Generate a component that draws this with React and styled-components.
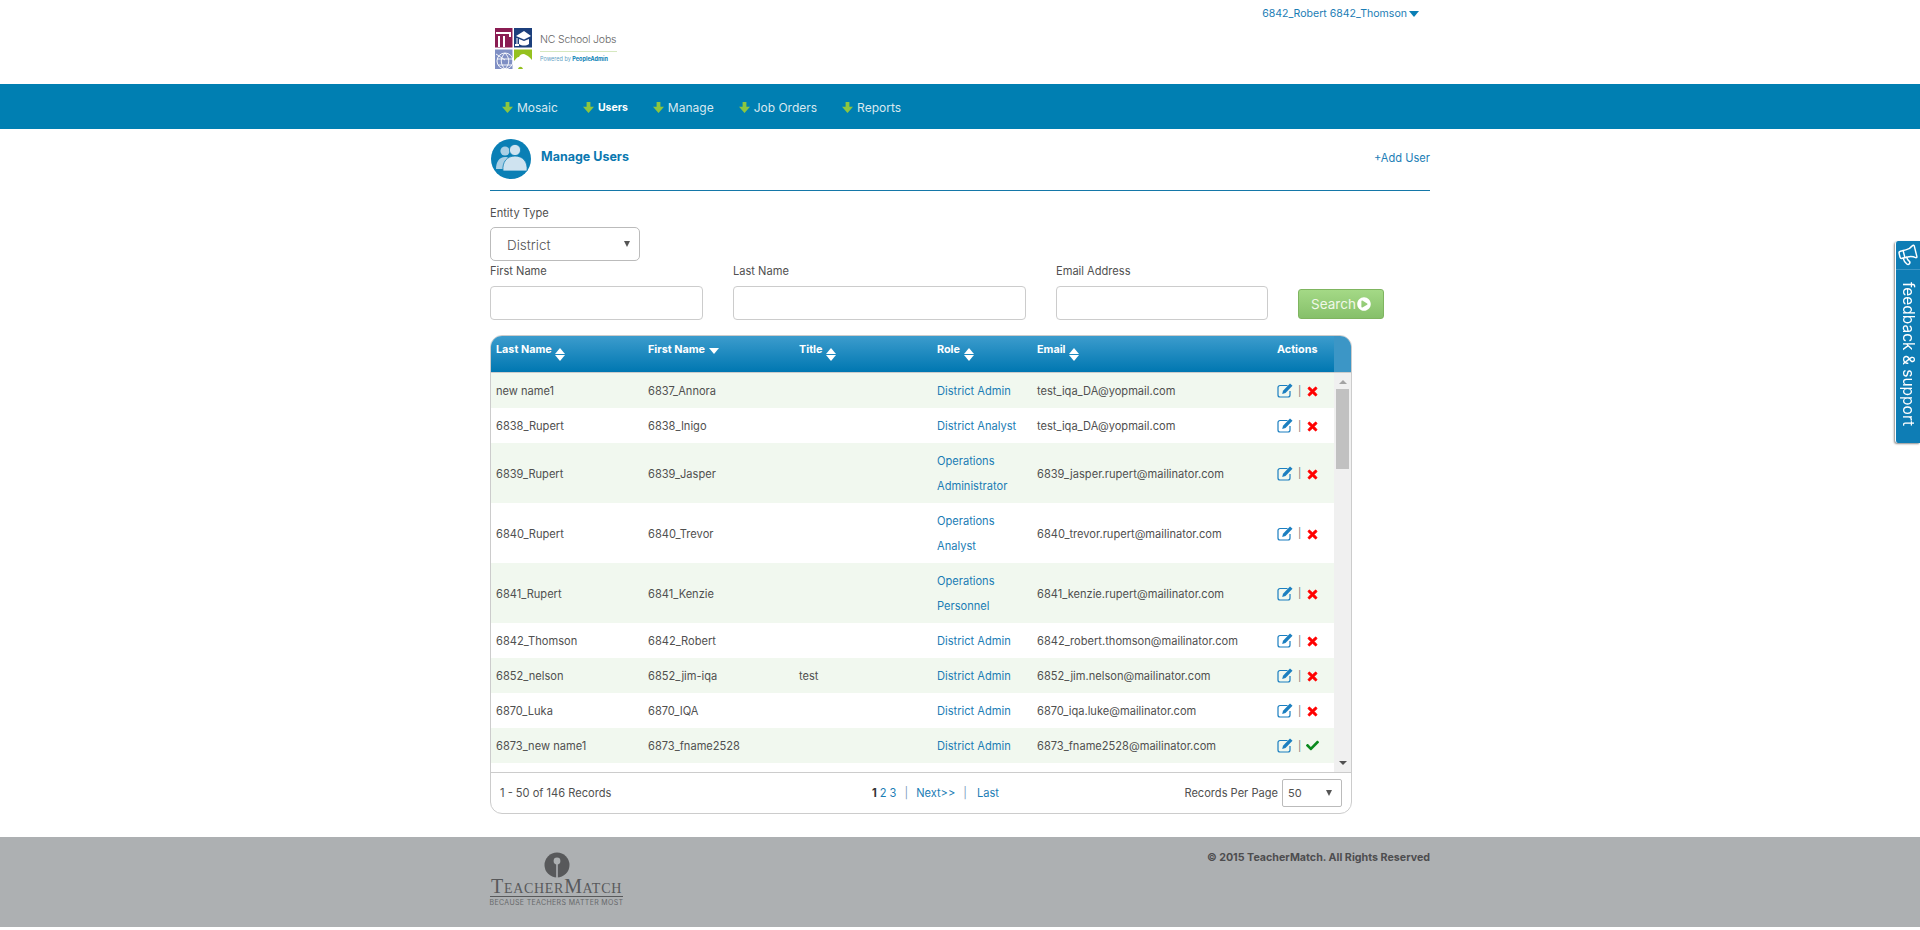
import styled, { createGlobalStyle } from "styled-components";
import { FaTimes, FaCheck, FaPlayCircle } from "react-icons/fa";
import { Megaphone } from "lucide-react";

const FONT = `Inter, "Liberation Sans", sans-serif`;
const COLS = "152px 151px 138px 100px 240px 62px";

const rows = [
	{ last: "new name1", first: "6837_Annora", role: "District Admin", email: "test_iqa_DA@yopmail.com" },
	{ last: "6838_Rupert", first: "6838_Inigo", role: "District Analyst", email: "test_iqa_DA@yopmail.com" },
	{ last: "6839_Rupert", first: "6839_Jasper", role: "Operations\nAdministrator", email: "6839_jasper.rupert@mailinator.com" },
	{ last: "6840_Rupert", first: "6840_Trevor", role: "Operations\nAnalyst", email: "6840_trevor.rupert@mailinator.com" },
	{ last: "6841_Rupert", first: "6841_Kenzie", role: "Operations\nPersonnel", email: "6841_kenzie.rupert@mailinator.com" },
	{ last: "6842_Thomson", first: "6842_Robert", role: "District Admin", email: "6842_robert.thomson@mailinator.com" },
	{ last: "6852_nelson", first: "6852_jim-iqa", title: "test", role: "District Admin", email: "6852_jim.nelson@mailinator.com" },
	{ last: "6870_Luka", first: "6870_IQA", role: "District Admin", email: "6870_iqa.luke@mailinator.com" },
	{ last: "6873_new name1", first: "6873_fname2528", role: "District Admin", email: "6873_fname2528@mailinator.com", inactive: true },
];

const navItems = ["Mosaic", "Users", "Manage", "Job Orders", "Reports"];

function LogoTiles() {
	return (
		<svg width="37" height="41" viewBox="0 0 37 41">
			<rect x="0" y="0" width="17.5" height="19.5" fill="#8a1c52" />
			<rect x="19" y="0" width="18" height="19.5" fill="#1c3f7c" />
			<rect x="0" y="21.5" width="17.5" height="19.5" fill="#7f8fc4" />
			<rect x="19" y="21.5" width="18" height="19.5" fill="#95c11f" />
			<path d="M1 4h13v2H1zM11 4h5v5h-2V6h-3zM3 8h2v11H3zM8 8h2v11H8z" fill="#fff" />
			<path d="M21 8l8-5 7 5-7 3.5zM24 11l5 2 5-2v5c-3 2-7 2-10 0z" fill="#fff" />
			<path d="M21.5 10h1v6h1.500v2h-4v-2h1.500z" fill="#fff" />
			<circle cx="10" cy="33" r="8" fill="none" stroke="#fff" strokeWidth="0.9" />
			<path d="M2 31h16M3 37h14M10 25c-5 5-5 11 0 16M10 25c5 5 5 11 0 16M1 26l9 6" fill="none" stroke="#fff" strokeWidth="0.9" />
			<path d="M19 41V33c2-2 3-4 5-4 1-3 5-4 7-2 3 1 4 3 6 5v9h-9c-1-3-4-3-5 0z" fill="#fff" />
		</svg>
	);
}

function UsersBadge() {
	return (
		<svg width="40" height="40" viewBox="0 0 40 40">
			<circle cx="20" cy="20" r="20" fill="#0a7fb5" />
			<circle cx="14" cy="12" r="4.600" fill="#a9cfe5" />
			<path d="M5 30c0-7 3-12 9-12 3 0 5 1 6 3v9z" fill="#a9cfe5" />
			<circle cx="24" cy="11" r="5.600" fill="#cfe3f0" stroke="#0a7fb5" strokeWidth="0.8" />
			<path d="M12 32c-1-9 4-15 12-15s13 6 12 15z" fill="#cfe3f0" stroke="#0a7fb5" strokeWidth="0.8" />
		</svg>
	);
}

function KeyholeMark() {
	return (
		<svg width="26" height="26" viewBox="0 0 26 26">
			<circle cx="13" cy="13" r="12.5" fill="#58595b" />
			<circle cx="13" cy="9" r="3.400" fill="#adb0b2" />
			<rect x="12.2" y="9" width="1.6" height="17" fill="#adb0b2" />
		</svg>
	);
}

function NavArrow() {
	return (
		<svg width="11" height="11" viewBox="0 0 11 11">
			<path d="M3.600 0h3.800v4.800H11L5.500 11 0 4.800h3.600z" fill="#8dc63f" />
		</svg>
	);
}

function EditIcon() {
	return (
		<svg width="16" height="15" viewBox="0 0 16 15">
			<path
				d="M10.500 2.500H3a2 2 0 0 0-2 2V12a2 2 0 0 0 2 2h8a2 2 0 0 0 2-2V8"
				fill="none"
				stroke="#1b7fc0"
				strokeWidth="1.200"
			/>
			<path d="M13 0.500l2.500 2.300-7 7.200-3.300 1 0.800-3.300z" fill="#1b7fc0" />
		</svg>
	);
}

function SortArrows({ down }) {
	return (
		<Sort>
			{!down && <TriUp />}
			<TriDown />
		</Sort>
	);
}

export default function App() {
	return (
		<>
			<GlobalStyle />
			<Header>
				<HeaderInner>
					<Logo>
						<LogoTiles />
						<LogoText>
							<LogoName>NC School Jobs</LogoName>
							<LogoSub>
								Powered by <b>PeopleAdmin</b>
							</LogoSub>
						</LogoText>
					</Logo>
					<UserMenu>
						6842_Robert 6842_Thomson
						<Caret />
					</UserMenu>
				</HeaderInner>
			</Header>
			<Nav>
				<NavInner>
					{navItems.map((item) => (
						<NavItem key={item} $active={item === "Users"}>
							<NavArrow />
							{item}
						</NavItem>
					))}
				</NavInner>
			</Nav>
			<Main>
				<TitleRow>
					<TitleLeft>
						<UsersBadge />
						<PageTitle>Manage Users</PageTitle>
					</TitleLeft>
					<AddLink>+Add User</AddLink>
				</TitleRow>

				<EntityLabel>Entity Type</EntityLabel>
				<SelectBox $w={150} $h={34} $r={5}>
					<EntityValue>District</EntityValue>
				</SelectBox>

				<SearchForm>
					<Field $w={213}>
						<Label>First Name</Label>
						<Input />
					</Field>
					<Field $w={293}>
						<Label>Last Name</Label>
						<Input />
					</Field>
					<Field $w={212}>
						<Label>Email Address</Label>
						<Input />
					</Field>
					<SearchButton>
						Search
						<FaPlayCircle />
					</SearchButton>
				</SearchForm>

				<Grid>
					<GridHead>
						<HeadRow>
							<HeadCell>
								Last Name <SortArrows />
							</HeadCell>
							<HeadCell>
								First Name <SortArrows down />
							</HeadCell>
							<HeadCell>
								Title <SortArrows />
							</HeadCell>
							<HeadCell>
								Role <SortArrows />
							</HeadCell>
							<HeadCell>
								Email <SortArrows />
							</HeadCell>
							<HeadCell>Actions</HeadCell>
						</HeadRow>
						<HeadStrip />
					</GridHead>
					<GridBody>
						<RowList>
							{rows.map((r, i) => (
								<Row key={r.email + r.last} $odd={i % 2 === 0}>
									<Cell>{r.last}</Cell>
									<Cell>{r.first}</Cell>
									<Cell>{r.title}</Cell>
									<RoleCell>{r.role}</RoleCell>
									<Cell>{r.email}</Cell>
									<ActionCell>
										<EditIcon />
										<Divider>|</Divider>
										{r.inactive ? <CheckIcon /> : <RemoveIcon />}
									</ActionCell>
								</Row>
							))}
						</RowList>
						<ScrollBar>
							<ScrollUp />
							<ScrollThumb />
							<ScrollDown />
						</ScrollBar>
					</GridBody>
					<GridFoot>
						<span>1 - 50 of 146 Records</span>
						<Pager>
							<b>1</b>
							<PageLink>2</PageLink>
							<PageLink>3</PageLink>
							<PagerBar>|</PagerBar>
							<PageLink>Next&gt;&gt;</PageLink>
							<PagerBar>|</PagerBar>
							<PageLink>Last</PageLink>
						</Pager>
						<PerPage>
							Records Per Page
							<SelectBox $w={60} $h={28} $r={2}>
								<PerPageValue>50</PerPageValue>
							</SelectBox>
						</PerPage>
					</GridFoot>
				</Grid>
			</Main>
			<Footer>
				<FooterInner>
					<FooterLogo>
						<KeyholeMark />
						<FooterName>TeacherMatch</FooterName>
						<FooterTag>BECAUSE TEACHERS MATTER MOST</FooterTag>
					</FooterLogo>
					<Copyright>© 2015 TeacherMatch. All Rights Reserved</Copyright>
				</FooterInner>
			</Footer>
			<Feedback>
				<FeedbackIcon>
					<Megaphone size={22} strokeWidth={1.6} />
				</FeedbackIcon>
				<FeedbackText>feedback &amp; support</FeedbackText>
			</Feedback>
		</>
	);
}

const GlobalStyle = createGlobalStyle`
	* {
		box-sizing: border-box;
	}

	body {
		margin: 0;
		background: #fff;
		font-family: ${FONT};
		font-size: 11.1px;
		color: #505050;
	}
`;

const Header = styled.header`
	height: 84px;
`;

const HeaderInner = styled.div`
	display: flex;
	justify-content: space-between;
	width: 940px;
	height: 100%;
	margin: 0 auto;
	padding: 7px 11px 0 5px;
`;

const Logo = styled.div`
	display: flex;
	align-items: flex-start;
	gap: 8px;
	margin-top: 21px;
`;

const LogoText = styled.div`
	display: flex;
	flex-direction: column;
	width: 77px;
	margin-top: 5px;
`;

const LogoName = styled.div`
	font-size: 10.5px;
	font-weight: 300;
	letter-spacing: -0.2px;
	color: #666;
	padding-bottom: 5px;
	border-bottom: 1px solid #d6e8c0;
	white-space: nowrap;
`;

const LogoSub = styled.div`
	margin-top: 4px;
	font-size: 5.5px;
	color: #5f9fc4;
	white-space: nowrap;

	b {
		color: #0a7fb5;
	}
`;

const UserMenu = styled.div`
	display: flex;
	align-items: flex-start;
	gap: 2px;
	font-size: 10.55px;
	line-height: 14px;
	color: #1b7db5;
`;

const Caret = styled.span`
	width: 0;
	height: 0;
	margin-top: 4px;
	border-left: 5px solid transparent;
	border-right: 5px solid transparent;
	border-top: 6px solid #0a7fb5;
`;

const Nav = styled.nav`
	height: 45px;
	background: #007fb2;
`;

const NavInner = styled.div`
	display: flex;
	align-items: center;
	gap: 25px;
	width: 940px;
	height: 100%;
	margin: 0 auto;
	padding: 1px 0 0 12px;
`;

const NavItem = styled.div`
	display: flex;
	align-items: center;
	gap: 4px;
	font-size: ${(p) => (p.$active ? 10.5 : 12)}px;
	font-weight: ${(p) => (p.$active ? 700 : 400)};
	color: ${(p) => (p.$active ? "#fff" : "#d8e8f0")};
`;

const Main = styled.main`
	width: 940px;
	height: 708px;
	margin: 0 auto;
`;

const TitleRow = styled.div`
	display: flex;
	align-items: flex-start;
	justify-content: space-between;
	height: 62px;
	padding-top: 10px;
	border-bottom: 1px solid #1477a8;
`;

const TitleLeft = styled.div`
	display: flex;
	align-items: flex-start;
	gap: 10px;
	padding-left: 1px;
`;

const PageTitle = styled.h1`
	margin: 10px 0 0;
	font-size: 12.5px;
	font-weight: 700;
	color: #0a78b0;
`;

const AddLink = styled.a`
	margin-top: 12px;
	color: #1b7db5;
`;

const EntityLabel = styled.div`
	margin-top: 15px;
	line-height: 14px;
`;

const SelectBox = styled.div`
	position: relative;
	display: flex;
	align-items: center;
	width: ${(p) => p.$w}px;
	height: ${(p) => p.$h}px;
	margin-top: ${(p) => (p.$w > 100 ? 7 : 0)}px;
	border: 1px solid #bbb;
	border-radius: ${(p) => p.$r}px;

	&::after {
		content: "";
		position: absolute;
		right: 9px;
		top: 50%;
		margin-top: -3px;
		border-left: 3.5px solid transparent;
		border-right: 3.5px solid transparent;
		border-top: 6px solid #555;
	}
`;

const EntityValue = styled.span`
	padding: 1px 0 0 16px;
	font-size: 13.5px;
	font-weight: 300;
	color: #555;
`;

const PerPageValue = styled.span`
	padding-left: 5px;
	font-size: 11px;
`;

const SearchForm = styled.div`
	display: flex;
	align-items: flex-end;
	gap: 30px;
	margin-top: 3px;
`;

const Field = styled.div`
	display: flex;
	flex-direction: column;
	gap: 8px;
	width: ${(p) => p.$w}px;
`;

const Label = styled.label`
	line-height: 14px;
`;

const Input = styled.input`
	width: 100%;
	height: 34px;
	border: 1px solid #ccc;
	border-radius: 4px;
	background: #fff;
`;

const SearchButton = styled.button`
	display: flex;
	align-items: center;
	justify-content: center;
	gap: 1px;
	width: 86px;
	height: 30px;
	margin-bottom: 1px;
	padding: 0;
	border: 1px solid #7fb560;
	border-radius: 3px;
	background: linear-gradient(#a4d986, #86c06a);
	font-family: ${FONT};
	font-size: 13.5px;
	color: #f0f8e8;

	svg {
		font-size: 14px;
		color: #fff;
	}
`;

const Grid = styled.section`
	width: 862px;
	height: 479px;
	margin-top: 15px;
	border: 1px solid #ccc;
	border-radius: 12px;
	overflow: hidden;
`;

const GridHead = styled.div`
	display: flex;
	height: 37px;
	border-bottom: 1px solid #ccc;
`;

const HeadRow = styled.div`
	display: grid;
	grid-template-columns: ${COLS};
	flex: 1;
	background: linear-gradient(#3c9ccd, #0077b1);
`;

const HeadCell = styled.div`
	display: flex;
	align-items: flex-start;
	padding: 7px 0 0 5px;
	font-size: 10.8px;
	font-weight: 700;
	line-height: 14px;
	color: #fff;
	white-space: pre;
`;

const HeadStrip = styled.div`
	width: 17px;
	background: #3c96c6;
`;

const Sort = styled.span`
	display: flex;
	flex-direction: column;
	gap: 1px;
	margin: 5px 0 0 1px;
`;

const TriUp = styled.i`
	border-left: 5px solid transparent;
	border-right: 5px solid transparent;
	border-bottom: 6px solid #fff;
`;

const TriDown = styled.i`
	border-left: 5px solid transparent;
	border-right: 5px solid transparent;
	border-top: 6px solid #fff;
`;

const GridBody = styled.div`
	display: flex;
	height: 400px;
	border-bottom: 1px solid #ccc;
`;

const RowList = styled.div`
	flex: 1;
	min-width: 0;
`;

const Row = styled.div`
	display: grid;
	grid-template-columns: ${COLS};
	align-items: center;
	min-height: 35px;
	background: ${(p) => (p.$odd ? "#f1f8ef" : "#fff")};
`;

const Cell = styled.div`
	padding: 1px 0 0 5px;
	white-space: nowrap;
`;

const RoleCell = styled(Cell)`
	padding: 6px 0 4px 5px;
	line-height: 25px;
	color: #1b7db5;
	white-space: pre-line;

	${Row}:nth-child(-n + 2) &,
	${Row}:nth-child(n + 6) & {
		padding: 1px 0 0 5px;
	}
`;

const ActionCell = styled.div`
	display: flex;
	align-items: center;
	gap: 5px;
	padding: 0 0 0 5px;
`;

const RemoveIcon = styled(FaTimes)`
	font-size: 13px;
	margin-top: 2px;
	stroke: #f00;
	stroke-width: 30;
	color: #f00;
`;

const CheckIcon = styled(FaCheck)`
	font-size: 13px;
	color: #0a8a1e;
`;

const Divider = styled.span`
	font-size: 10px;
	color: #777;
`;

const ScrollBar = styled.div`
	display: flex;
	flex-direction: column;
	align-items: center;
	width: 17px;
	background: #f0f0f0;
`;

const ScrollUp = styled.i`
	margin-top: 7px;
	border-left: 4px solid transparent;
	border-right: 4px solid transparent;
	border-bottom: 4px solid #a3a3a3;
`;

const ScrollThumb = styled.div`
	width: 13px;
	height: 80px;
	margin-top: 5px;
	background: #c1c1c1;
`;

const ScrollDown = styled.i`
	margin-top: auto;
	margin-bottom: 7px;
	border-left: 4px solid transparent;
	border-right: 4px solid transparent;
	border-top: 4px solid #505050;
`;

const GridFoot = styled.div`
	display: grid;
	grid-template-columns: 372px 1fr auto;
	align-items: center;
	height: 40px;
	padding: 0 9px;
`;

const Pager = styled.div`
	display: flex;
	align-items: center;
	gap: 3px;

	b {
		color: #333;
	}
`;

const PageLink = styled.a`
	color: #1b7db5;
`;

const PagerBar = styled.span`
	margin: 0 5px;
	color: #7f9fc0;

	& + a + & {
		margin-right: 7px;
	}
`;

const PerPage = styled.div`
	display: flex;
	align-items: center;
	gap: 4px;
`;

const Footer = styled.footer`
	height: 90px;
	background: #adb0b2;
`;

const FooterInner = styled.div`
	display: flex;
	justify-content: space-between;
	width: 940px;
	margin: 0 auto;
`;

const FooterLogo = styled.div`
	display: flex;
	flex-direction: column;
	align-items: center;
	width: 133px;
	margin-top: 15px;
`;

const FooterName = styled.div`
	margin-top: -1px;
	padding-bottom: 1px;
	width: 100%;
	border-bottom: 1px solid #58595b;
	font-family: "Liberation Serif", serif;
	font-size: 20px;
	font-variant: small-caps;
	line-height: 18px;
	text-align: center;
	letter-spacing: 0.7px;
	color: #58595b;
	white-space: nowrap;
`;

const FooterTag = styled.div`
	margin-top: 1px;
	font-size: 7px;
	letter-spacing: 0.35px;
	color: #66686a;
	white-space: nowrap;
`;

const Copyright = styled.div`
	margin-top: 14px;
	font-size: 10.7px;
	font-weight: 700;
	color: #4d4d4f;
`;

const Feedback = styled.aside`
	position: fixed;
	top: 241px;
	right: 0;
	display: flex;
	flex-direction: column;
	align-items: center;
	width: 25px;
	height: 202px;
	border-radius: 3px 0 0 3px;
	border-left: 1px solid #fff;
	background: #0e7db5;
	box-shadow: -1px 1px 2px rgba(0, 0, 0, 0.45);
	color: #fff;
`;

const FeedbackIcon = styled.div`
	display: flex;
	justify-content: center;
	width: 100%;
	height: 29px;
	padding-top: 3px;
	border-bottom: 1px solid #3c96c6;

	svg {
		transform: rotate(-14deg);
	}
`;

const FeedbackText = styled.div`
	margin-top: 12px;
	writing-mode: vertical-rl;
	font-size: 15.5px;
	white-space: nowrap;
`;
